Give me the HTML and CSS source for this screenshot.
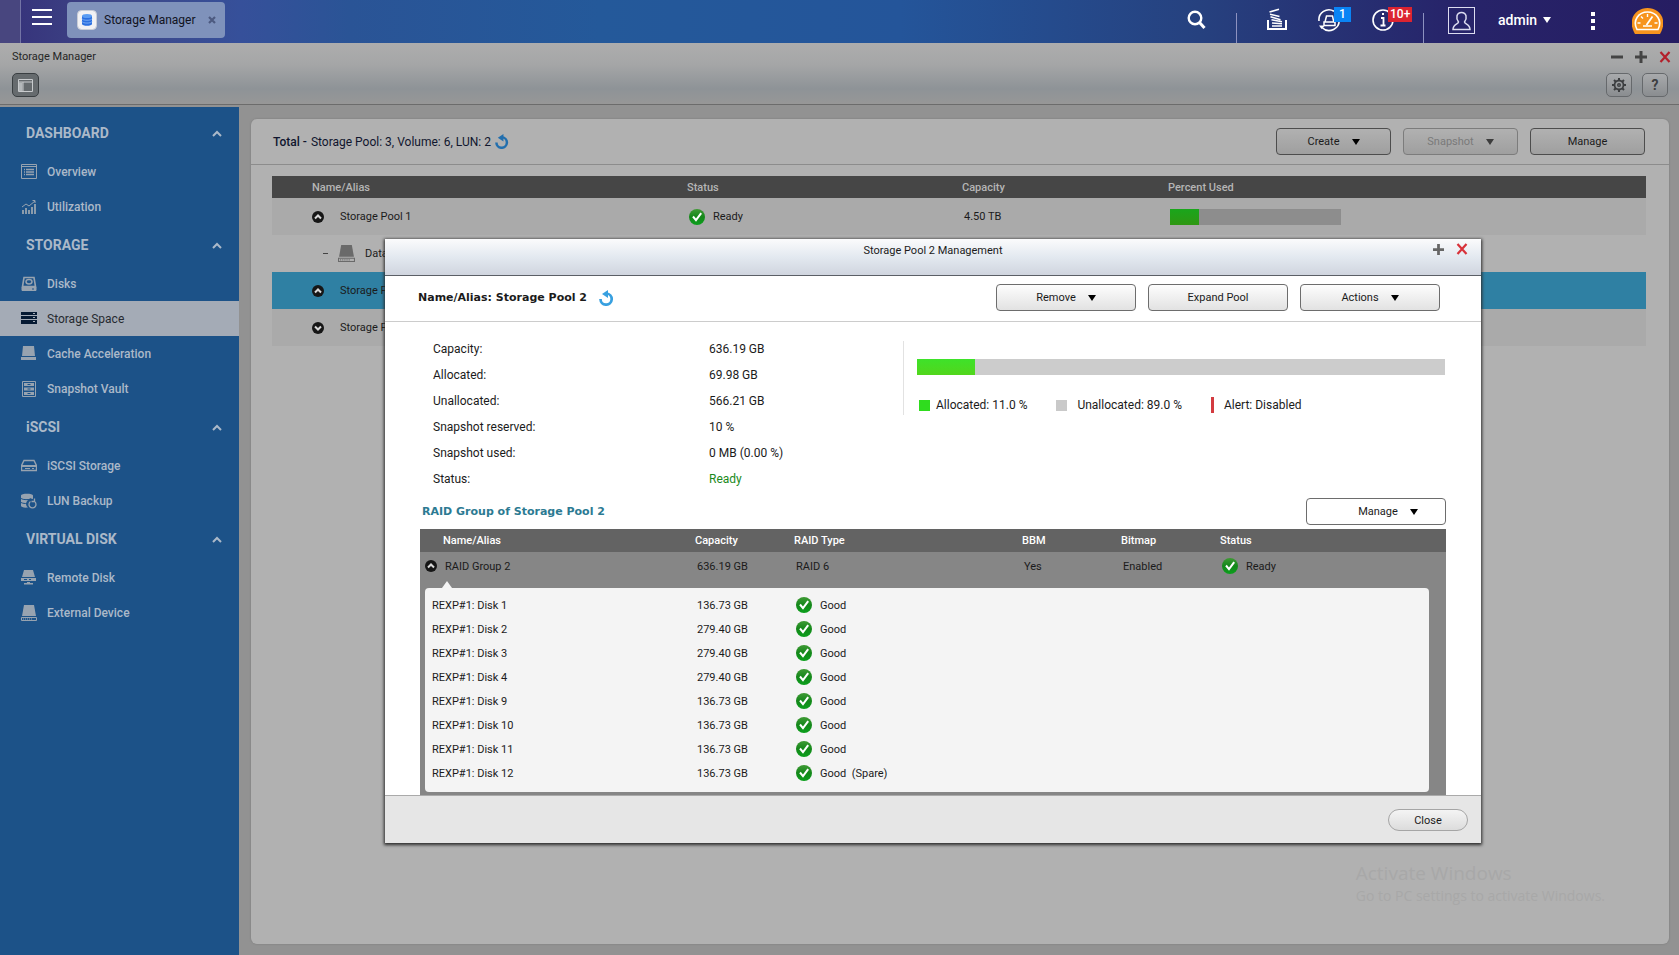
FILE: index.html
```html
<!DOCTYPE html>
<html lang="en">
<head>
    <meta charset="UTF-8">
    <meta name="viewport" content="width=device-width, initial-scale=1.0">
    <title>Storage Manager</title>
    <link rel="stylesheet" href="styles.css">
</head>
<body>

<!-- shared icons -->
<svg class="sprite" aria-hidden="true">
    <defs>
        <linearGradient id="okFill" x1="0" y1="0" x2="0" y2="1">
            <stop offset="0" stop-color="#3f9a35"/>
            <stop offset="0.5" stop-color="#14871a"/>
            <stop offset="1" stop-color="#0ba01c"/>
        </linearGradient>
    </defs>
    <symbol id="ok" viewBox="0 0 16 16">
        <circle cx="8" cy="8" r="8" fill="url(#okFill)"/>
        <path d="M4 7.5l3 3.7 5.2-7" fill="none" stroke="#fff" stroke-width="2"/>
    </symbol>
    <symbol id="up" viewBox="0 0 12 12">
        <circle cx="6" cy="6" r="6" fill="#161616"/>
        <path d="M3 7.5l3-3 3 3" fill="none" stroke="#d8d8d8" stroke-width="2"/>
    </symbol>
    <symbol id="down" viewBox="0 0 12 12">
        <circle cx="6" cy="6" r="6" fill="#161616"/>
        <path d="M3 4.5l3 3 3-3" fill="none" stroke="#d8d8d8" stroke-width="2"/>
    </symbol>
    <symbol id="refresh" viewBox="0 0 16 16">
        <path d="M7.500 3.500a5.600 5.600 0 1 1-6 5.500" fill="none" stroke="currentColor" stroke-width="2.700"/>
        <path d="M3 4L9 0v8z" fill="currentColor"/>
    </symbol>
    <symbol id="chev" viewBox="0 0 10 7">
        <path d="M1 6l4-4 4 4" fill="none" stroke="currentColor" stroke-width="2"/>
    </symbol>
    <symbol id="plus" viewBox="0 0 12 12">
        <path d="M6 0v12M0 6h12" stroke="currentColor" stroke-width="3"/>
    </symbol>
    <symbol id="minus" viewBox="0 0 12 12">
        <path d="M0 6h12" stroke="currentColor" stroke-width="3"/>
    </symbol>
    <symbol id="cross" viewBox="0 0 12 12">
        <path d="M1.5 1l9 10M10.5 1l-9 10" stroke="currentColor" stroke-width="2.2"/>
    </symbol>
    <symbol id="drive" viewBox="0 0 16 16">
        <path d="M3 0h10l2 11H1z" fill="currentColor"/>
        <path d="M.5 12.5h15v3H.5z" fill="none" stroke="currentColor"/>
        <path d="M2 14h9" stroke="currentColor" stroke-dasharray="1 1"/>
    </symbol>
</svg>

<header class="topbar">
    <button class="menu-btn" aria-label="Main menu">
        <svg width="20" height="18" viewBox="0 0 20 18"><path d="M0 2h20M0 9h20M0 16h20" stroke="#fff" stroke-width="2"/></svg>
    </button>
    <div class="app-tab">
        <svg width="20" height="20" viewBox="0 0 20 20">
            <rect x=".5" y=".5" width="19" height="19" rx="4" fill="#f1f1f4" stroke="#c9cdd6"/>
            <path d="M5 6v8c0 2.4 10 2.4 10 0V6z" fill="#2b6fe0"/>
            <ellipse cx="10" cy="6" rx="5" ry="2" fill="#5a9cf3"/>
            <path d="M5 8.6c0 2.2 10 2.2 10 0M5 11.4c0 2.2 10 2.2 10 0" fill="none" stroke="#8ab9f8" stroke-width=".8"/>
        </svg>
        <span>Storage Manager</span>
        <button class="tab-close" aria-label="Close tab">
            <svg width="8" height="8" viewBox="0 0 8 8"><path d="M1 1l6 6M7 1L1 7" stroke="#4d5a80" stroke-width="2.2"/></svg>
        </button>
    </div>

    <div class="top-tools">
        <button class="tool search" aria-label="Search">
            <svg width="20" height="20" viewBox="0 0 20 20"><circle cx="8" cy="8" r="6.3" fill="none" stroke="#fff" stroke-width="2.4"/><path d="M12.5 12.5l5 5.5" stroke="#fff" stroke-width="3"/></svg>
        </button>
        <span class="sep"></span>
        <button class="tool tasks" aria-label="Background tasks">
            <svg width="20" height="22" viewBox="0 0 20 22"><path d="M1 12v9h18v-9" fill="none" stroke="#fff" stroke-width="2"/><path d="M5 18h10M5 15l10 .8M4.5 11.700l10.500 2M3.500 8.700l10 3M3 6.200l9.500 2.300M2.500 4l9.500-2.800" stroke="#fff" stroke-width="1.600"/></svg>
        </button>
        <button class="tool devices" aria-label="External devices">
            <svg width="24" height="24" viewBox="0 0 24 24" fill="none" stroke="#fff" stroke-width="1.600"><path d="M2 13A10 10 0 0 1 17 3.200M22 11A10 10 0 0 1 5 19.500"/><path d="M2 17.500h6L4.500 21z" fill="#fff" stroke="none"/><path d="M9.500 8h6l1.300 6H8zM7 14h11v3.500H7z" stroke-width="1.500"/></svg>
            <span class="badge blue">1</span>
        </button>
        <button class="tool events" aria-label="Event notifications">
            <svg width="24" height="24" viewBox="0 0 24 24" fill="none" stroke="#fff"><circle cx="12" cy="12" r="10" stroke-width="1.600"/><path d="M10 10h2.500v7M9.500 17.500h5M11 6h2" stroke-width="1.800"/></svg>
            <span class="badge red">10+</span>
        </button>
        <span class="sep"></span>
        <button class="user-btn" aria-label="User">
            <svg width="27" height="27" viewBox="0 0 27 27" fill="none" stroke="#dcdcf0"><rect x=".5" y=".5" width="26" height="26"/><path d="M10.500 15c-3-4-2-9.500 3-9.500s6 5.500 3 9.500c0 2 5.500 2 5.500 7.500H5c0-5.500 5.500-5.500 5.500-7.500z" stroke-width="1.500"/></svg>
        </button>
        <button class="admin">admin <i class="caret"></i></button>
        <button class="tool more" aria-label="More">
            <svg width="4" height="19" viewBox="0 0 4 19" fill="#fff"><path d="M0 0h4v4H0zM0 7h4v4H0zM0 14h4v4H0z"/></svg>
        </button>
        <button class="tool" aria-label="Dashboard">
            <svg width="31" height="26" viewBox="0 0 31 26"><path d="M3 26C-6 10 5 0 15.500 0S37 10 28 26z" fill="#f7941e"/><path d="M5 21.500C0 12 7 4 15.500 4S31 12 26 21.500z" fill="none" stroke="#fff" stroke-width="1.600"/><path d="M5.500 15h3M22.500 15h3M9 8.500l2 2M15.500 6v3M11 18h9" stroke="#fff" stroke-width="1.400"/><path d="M14.500 17l6-8.500" stroke="#fff" stroke-width="1.800"/></svg>
        </button>
    </div>
</header>

<div class="titlebar">
    <div class="title-row">
        <span>Storage Manager</span>
        <div class="win-btns">
            <button aria-label="Minimize"><svg width="12" height="12"><use href="#minus"/></svg></button>
            <button aria-label="Maximize"><svg width="12" height="12"><use href="#plus"/></svg></button>
            <button class="x" aria-label="Close"><svg width="12" height="12"><use href="#cross"/></svg></button>
        </div>
    </div>
    <div class="title-row">
        <button class="pane-btn" aria-label="Toggle sidebar">
            <svg width="15" height="13" viewBox="0 0 15 13"><path d="M.5 .5h14v12H.5zM.5 3h14M5 3v9.500" fill="none" stroke="#c8cbcd"/><path d="M1 3.500h3.500V12H1z" fill="#b4b8ba"/></svg>
        </button>
        <div class="small-btns">
            <button aria-label="Settings">
                <svg width="16" height="16" viewBox="0 0 16 16" fill="none" stroke="#3c3e40"><circle cx="8" cy="8" r="4.500" stroke-width="1.800"/><circle cx="8" cy="8" r="1.300" stroke-width="1.400"/><path d="M8 1v2.500M8 12.500V15M1 8h2.500M12.500 8H15M3 3l1.800 1.800M11.200 11.200L13 13M13 3l-1.800 1.800M4.800 11.200L3 13" stroke-width="2"/></svg>
            </button>
            <button aria-label="Help">?</button>
        </div>
    </div>
</div>

<div class="workspace">
    <nav class="sidebar">
        <h2>DASHBOARD <svg width="10" height="7"><use href="#chev"/></svg></h2>
        <a href="#">
            <svg width="16" height="16" viewBox="0 0 16 16" fill="none" stroke="currentColor"><path d="M.5 .5h15v14H.5zM.5 2.500h15"/><path d="M3 5.500h1M5 5.500h8M3 8h1M5 8h8M3 10.500h1M5 10.500h8" stroke-width="1.500"/></svg>
            Overview
        </a>
        <a href="#">
            <svg width="16" height="16" viewBox="0 0 16 16" fill="none" stroke="currentColor"><path d="M2 15v-4M5 15V9M8 15v-4M11 15V8M14 15V5" stroke-width="1.800"/><path d="M1 8l4-3 3 2 6-5M11.500 1.500H14V4"/></svg>
            Utilization
        </a>
        <h2>STORAGE <svg width="10" height="7"><use href="#chev"/></svg></h2>
        <a href="#">
            <svg width="16" height="16" viewBox="0 0 16 16" fill="none" stroke="currentColor"><path d="M3 1.500h10l1.500 9h-13z" stroke-width="1.600"/><ellipse cx="8" cy="5.800" rx="3" ry="2.200" stroke-width="1.500"/><path d="M1 11h14v3.500H1z" fill="currentColor"/><path d="M11 13h2" stroke="#1c5288"/></svg>
            Disks
        </a>
        <a href="#" class="active">
            <svg width="16" height="16" viewBox="0 0 16 16" fill="#061a33"><path d="M0 1h16v3H0zM0 5h16v3H0zM0 9h16v4H0z"/><path d="M12 2.500h2M12 6.500h2M12 10.500h2" stroke="#a4acb6"/></svg>
            Storage Space
        </a>
        <a href="#">
            <svg width="16" height="16" viewBox="0 0 16 16" fill="currentColor"><path d="M2 0h11l1 10H1zM0 11h15v3H0z"/></svg>
            Cache Acceleration
        </a>
        <a href="#">
            <svg width="16" height="16" viewBox="0 0 16 16" fill="none" stroke="currentColor"><path d="M1.500 .5h13v15h-13z"/><path d="M3 3.500h10M3 8h10M3 12.500h10" stroke-width="3"/><path d="M6.500 3.500h3M6.500 8h3M6.500 12.500h3" stroke="#1c5288"/></svg>
            Snapshot Vault
        </a>
        <h2>iSCSI <svg width="10" height="7"><use href="#chev"/></svg></h2>
        <a href="#">
            <svg width="16" height="16" viewBox="0 0 16 16" fill="none" stroke="currentColor"><path d="M3 2.500h10l2.500 5v5H.5v-5z" stroke-width="1.400"/><path d="M1 8h14" stroke-width="2"/><path d="M4 10.500h5M11 10.500h2"/></svg>
            iSCSI Storage
        </a>
        <a href="#">
            <svg width="16" height="16" viewBox="0 0 16 16"><path d="M0 2.500C0 0 12 0 12 2.500V6a5 5 0 0 0-5 8.500C3 15 0 14 0 13z" fill="currentColor"/><path d="M0 5.500c2 1.500 8 1.500 10 .3M0 9.500c2 1 4 1 6 1" fill="none" stroke="#1c5288"/><path d="M9.500 8.500a3.500 3.500 0 1 0 4 0M13.500 5.500v3h-3" fill="none" stroke="currentColor" stroke-width="1.300"/></svg>
            LUN Backup
        </a>
        <h2>VIRTUAL DISK <svg width="10" height="7"><use href="#chev"/></svg></h2>
        <a href="#">
            <svg width="16" height="16" viewBox="0 0 16 16" fill="currentColor"><path d="M3 0h9l2 7H1zM0 8h15v3H0zM6 12h3v1h3v1.500H3V13h3z"/><path d="M3 9.500h3M8 9.500h2" stroke="#1c5288"/></svg>
            Remote Disk
        </a>
        <a href="#">
            <svg width="16" height="16"><use href="#drive"/></svg>
            External Device
        </a>
    </nav>

    <main class="panel">
        <div class="panel-head">
            <div class="totals">
                <b>Total -</b> <span>Storage Pool: 3, Volume: 6, LUN: 2</span>
                <button class="refresh" aria-label="Refresh"><svg width="15" height="15"><use href="#refresh"/></svg></button>
            </div>
            <div class="head-btns">
                <button class="btn dim">Create <i class="caret"></i></button>
                <button class="btn dim" disabled>Snapshot <i class="caret"></i></button>
                <button class="btn dim">Manage</button>
            </div>
        </div>
        <table class="pools">
            <colgroup><col class="c-name"><col class="c-status"><col class="c-cap"><col></colgroup>
            <thead>
                <tr><th>Name/Alias</th><th>Status</th><th>Capacity</th><th>Percent Used</th></tr>
            </thead>
            <tbody>
                <tr class="alt">
                    <td><div class="cell"><svg width="12" height="12"><use href="#up"/></svg>Storage Pool 1</div></td>
                    <td><div class="status"><svg width="16" height="16"><use href="#ok"/></svg>Ready</div></td>
                    <td>4.50 TB</td>
                    <td><div class="meter"><div class="fill" style="width: 17%"></div></div></td>
                </tr>
                <tr>
                    <td><div class="cell child"><span class="dash"></span><svg width="17" height="17"><use href="#drive"/></svg>DataVol1</div></td>
                    <td></td><td></td><td></td>
                </tr>
                <tr class="selected">
                    <td><div class="cell"><svg width="12" height="12"><use href="#up"/></svg>Storage Pool 2</div></td>
                    <td></td><td></td><td></td>
                </tr>
                <tr class="alt">
                    <td><div class="cell"><svg width="12" height="12"><use href="#down"/></svg>Storage Pool 3</div></td>
                    <td></td><td></td><td></td>
                </tr>
            </tbody>
        </table>
        <div class="watermark">
            <p class="wm-title">Activate Windows</p>
            <p>Go to PC settings to activate Windows.</p>
        </div>
    </main>
</div>

<section class="dialog" role="dialog" aria-labelledby="dlgTitle">
    <div class="dlg-title">
        <span id="dlgTitle">Storage Pool 2 Management</span>
        <div class="dlg-ctrl">
            <button aria-label="Maximize"><svg width="11" height="11"><use href="#plus"/></svg></button>
            <button class="x" aria-label="Close dialog"><svg width="12" height="12"><use href="#cross"/></svg></button>
        </div>
    </div>

    <div class="dlg-head">
        <h1>Name/Alias: Storage Pool 2</h1>
        <button class="refresh" aria-label="Refresh"><svg width="16" height="16"><use href="#refresh"/></svg></button>
        <div class="head-btns">
            <button class="btn">Remove <i class="caret"></i></button>
            <button class="btn">Expand Pool</button>
            <button class="btn">Actions <i class="caret"></i></button>
        </div>
    </div>

    <div class="summary">
        <dl>
            <dt>Capacity:</dt><dd>636.19 GB</dd>
            <dt>Allocated:</dt><dd>69.98 GB</dd>
            <dt>Unallocated:</dt><dd>566.21 GB</dd>
            <dt>Snapshot reserved:</dt><dd>10 %</dd>
            <dt>Snapshot used:</dt><dd>0 MB (0.00 %)</dd>
            <dt>Status:</dt><dd class="good">Ready</dd>
        </dl>
        <div class="usage">
            <div class="meter"><div class="fill" style="width: 11%"></div></div>
            <div class="legend">
                <span class="key green"></span><span>Allocated: 11.0 %</span>
                <span class="key grey"></span><span>Unallocated: 89.0 %</span>
                <span class="key alert"></span><span>Alert: Disabled</span>
            </div>
        </div>
    </div>

    <div class="raid-head">
        <h3>RAID Group of Storage Pool 2</h3>
        <button class="btn plain">Manage <i class="caret"></i></button>
    </div>

    <div class="raid">
        <table class="group">
            <colgroup><col class="g-name"><col class="g-cap"><col class="g-type"><col class="g-bbm"><col class="g-bmp"><col></colgroup>
            <thead>
                <tr><th>Name/Alias</th><th>Capacity</th><th>RAID Type</th><th>BBM</th><th>Bitmap</th><th>Status</th></tr>
            </thead>
            <tbody>
                <tr>
                    <td><div class="cell"><svg width="12" height="12"><use href="#up"/></svg>RAID Group 2</div></td>
                    <td>636.19 GB</td>
                    <td>RAID 6</td>
                    <td>Yes</td>
                    <td>Enabled</td>
                    <td><div class="status"><svg width="16" height="16"><use href="#ok"/></svg>Ready</div></td>
                </tr>
            </tbody>
        </table>
        <div class="disk-box">
            <table class="disks" aria-label="Disks of RAID Group 2">
                <colgroup><col class="d-name"><col class="g-cap"><col></colgroup>
                <tbody>
                    <tr><td>REXP#1: Disk 1</td><td>136.73 GB</td><td><div class="status"><svg width="16" height="16"><use href="#ok"/></svg>Good</div></td></tr>
                    <tr><td>REXP#1: Disk 2</td><td>279.40 GB</td><td><div class="status"><svg width="16" height="16"><use href="#ok"/></svg>Good</div></td></tr>
                    <tr><td>REXP#1: Disk 3</td><td>279.40 GB</td><td><div class="status"><svg width="16" height="16"><use href="#ok"/></svg>Good</div></td></tr>
                    <tr><td>REXP#1: Disk 4</td><td>279.40 GB</td><td><div class="status"><svg width="16" height="16"><use href="#ok"/></svg>Good</div></td></tr>
                    <tr><td>REXP#1: Disk 9</td><td>136.73 GB</td><td><div class="status"><svg width="16" height="16"><use href="#ok"/></svg>Good</div></td></tr>
                    <tr><td>REXP#1: Disk 10</td><td>136.73 GB</td><td><div class="status"><svg width="16" height="16"><use href="#ok"/></svg>Good</div></td></tr>
                    <tr><td>REXP#1: Disk 11</td><td>136.73 GB</td><td><div class="status"><svg width="16" height="16"><use href="#ok"/></svg>Good</div></td></tr>
                    <tr><td>REXP#1: Disk 12</td><td>136.73 GB</td><td><div class="status"><svg width="16" height="16"><use href="#ok"/></svg>Good&nbsp; (Spare)</div></td></tr>
                </tbody>
            </table>
        </div>
    </div>

    <div class="dlg-foot">
        <button class="close-btn">Close</button>
    </div>
</section>

</body>
</html>
```
FILE: styles.css
```css
* {
    box-sizing: border-box;
}

body {
    margin: 0;
    min-height: 100vh;
    display: flex;
    flex-direction: column;
    position: relative;
    background: #929292;
    font-family: Roboto, "Liberation Sans", sans-serif;
    font-size: 11px;
    color: #1b1b1b;
}

h1, h2, h3, p, dl, dd {
    margin: 0;
}

button {
    font-family: inherit;
    font-size: 11px;
    color: inherit;
    background: none;
    border: none;
    padding: 0;
    cursor: pointer;
}

svg {
    display: block;
    flex: none;
}

.sprite {
    position: absolute;
    width: 0;
    height: 0;
}

.caret {
    display: inline-block;
    border: 4px solid transparent;
    border-top: 6px solid currentColor;
    border-bottom: 0;
}

/* top bar */
.topbar {
    height: 43px;
    display: flex;
    align-items: flex-start;
    background: linear-gradient(90deg, #48467f 0, #48467f 20px, #37357c 21px, #3e4788 120px, #36509a 240px, #2a5496 350px, #24599a 600px, #24559a 900px, #26417f 1200px, #27246a 1450px, #261d62 100%);
}

.menu-btn {
    margin-left: 20px;
    padding: 8px 12px 8px 11px;
    height: 43px;
    border-left: 1px solid #7374a5;
    display: flex;
}

.app-tab {
    display: flex;
    align-items: center;
    width: 158px;
    height: 36px;
    margin: 2px 0 0 3px;
    padding: 0 9px 0 10px;
    gap: 7px;
    border-radius: 4px;
    background: #7f92bb;
    font-size: 12px;
    color: #11131f;
    white-space: nowrap;
}

.tab-close {
    margin-left: auto;
}

.top-tools {
    margin-left: auto;
    padding-right: 16px;
    height: 43px;
    display: flex;
    align-items: flex-start;
}

.tool {
    position: relative;
    padding-top: 8px;
}

.search {
    padding-top: 10px;
    margin-right: 29px;
}

.sep {
    width: 1px;
    height: 30px;
    margin-top: 13px;
    background: #8d92c0;
}

.tasks {
    margin: 0 30px 0 30px;
}

.devices {
    margin-right: 30px;
}

.events {
    margin-right: 28px;
}

.badge {
    position: absolute;
    left: 17px;
    top: 7px;
    height: 15px;
    padding: 0 5px;
    line-height: 15px;
    font-size: 12px;
    font-weight: 500;
    color: #fff;
}

.badge.blue {
    background: #0a84f5;
}

.badge.red {
    padding: 0 2px;
    background: #dc2431;
}

.user-btn {
    padding-top: 7px;
    margin-left: 24px;
}

.admin {
    display: flex;
    align-items: center;
    gap: 6px;
    height: 40px;
    margin: 0 40px 0 23px;
    font-size: 14px;
    font-weight: 500;
    color: #fff;
}

.more {
    padding-top: 12px;
    margin-right: 37px;
}

/* window title */
.titlebar {
    height: 62px;
    padding: 0 8px 0 12px;
    background: linear-gradient(#adadad, #a5a6a7 35%, #8e9397 75%, #979797);
    border-bottom: 1px solid #6c6c6c;
}

.title-row {
    display: flex;
    justify-content: space-between;
    align-items: center;
    height: 27px;
    color: #262626;
}

.win-btns {
    display: flex;
    gap: 12px;
    color: #444;
}

.x {
    color: #b3202b;
}

.pane-btn,
.small-btns button {
    display: flex;
    align-items: center;
    justify-content: center;
    width: 27px;
    height: 24px;
    border-radius: 5px;
    border: 1px solid #3a3f42;
    background: #666b6e;
}

.small-btns {
    display: flex;
    gap: 10px;
    padding-right: 3px;
}

.small-btns button {
    width: 26px;
    border-color: #66696c;
    background: linear-gradient(#a8aaac, #8a8d90);
    font-size: 14px;
    font-weight: 700;
    color: #3c3e40;
}

.title-row + .title-row {
    height: 30px;
}

/* body */
.workspace {
    flex: 1;
    display: flex;
    margin-top: 2px;
}

.sidebar {
    width: 239px;
    padding-top: 5px;
    background: #1c5288;
    color: #abb9c9;
}

.sidebar h2 {
    display: flex;
    align-items: center;
    justify-content: space-between;
    height: 42px;
    padding: 0 17px 0 26px;
    font-size: 14px;
    font-weight: 700;
}

.sidebar a {
    display: flex;
    align-items: center;
    gap: 10px;
    height: 35px;
    padding-left: 21px;
    font-size: 12px;
    font-weight: 500;
    color: inherit;
    text-decoration: none;
}

.sidebar a svg {
    color: #97a3b0;
}

.sidebar a.active {
    background: #a4abb6;
    color: #262a30;
    font-weight: 400;
}

.panel {
    position: relative;
    flex: 1;
    margin: 12px 10px 11px 12px;
    border-radius: 6px;
    background: #b1b1b1;
    box-shadow: 0 0 2px #777;
}

.panel-head {
    display: flex;
    align-items: center;
    justify-content: space-between;
    height: 46px;
    padding: 0 24px 0 22px;
    border-bottom: 1px solid #8c8c8c;
}

.totals {
    display: flex;
    align-items: center;
    gap: 4px;
    font-size: 12px;
    color: #10162e;
}

.totals b {
    font-weight: 500;
}

.refresh {
    margin-left: 12px;
    color: #38a0e0;
}

.totals .refresh {
    margin-left: 0;
    color: #226fae;
}

.head-btns {
    display: flex;
    gap: 12px;
}

.btn {
    display: flex;
    align-items: center;
    justify-content: center;
    gap: 12px;
    width: 140px;
    height: 27px;
    border: 1px solid #6d6d6d;
    border-radius: 4px;
    background: linear-gradient(#fdfdfd, #e2e2e2);
}

.btn.dim {
    width: 115px;
    border-color: #4d4d4d;
    background: linear-gradient(#b1b1b1, #9f9f9f);
}

.btn.dim:disabled {
    border-color: #7c7c7c;
    color: #7a7a7a;
}

.btn .caret {
    color: #000;
}

.btn:disabled .caret {
    color: #3c3c3c;
}

.btn.plain {
    padding-left: 24px;
    background: #fff;
}

/* tables */
table {
    border-collapse: collapse;
    table-layout: fixed;
    width: 100%;
}

th {
    padding: 0;
    text-align: left;
    font-weight: 500;
}

td {
    padding: 0;
    white-space: nowrap;
}

.cell,
.status {
    display: flex;
    align-items: center;
    gap: 8px;
}

.pools {
    width: auto;
    min-width: calc(100% - 44px);
    margin: 11px 23px 0 21px;
}

.pools th {
    height: 22px;
    background: #464646;
    color: #b5b5b5;
}

.pools td {
    height: 37px;
    padding-left: 2px;
}

.pools th:first-child {
    padding-left: 40px;
}

.pools td:first-child {
    padding-left: 40px;
}

.pools .cell {
    gap: 16px;
}

.pools .child {
    gap: 10px;
    padding-left: 11px;
}

.pools .child svg {
    color: #6a6a6a;
}

.dash {
    width: 5px;
    height: 1px;
    background: #444;
}

.c-name { width: 415px; }
.c-status { width: 275px; }
.c-cap { width: 206px; }

.alt {
    background: #aaa;
}

.selected {
    background: #2f80a3;
}

.meter {
    height: 16px;
    background: #ccc;
}

.fill {
    height: 100%;
    background: linear-gradient(#3ee22a, #52d61c);
}

.pools .meter {
    width: 171px;
    background: #8d8d8d;
}

.pools .fill {
    background: linear-gradient(#1aa61c, #2f9712);
}

.watermark {
    position: absolute;
    right: 64px;
    bottom: 39px;
    font-family: "Open Sans", sans-serif;
    font-size: 14px;
    color: #a8a8a8;
}

.wm-title {
    font-size: 19px;
}

/* pool dialog */
.dialog {
    position: absolute;
    left: 385px;
    right: 198px;
    top: 239px;
    background: #fff;
    box-shadow: 0 1px 3px 1px #2c2c2c;
}

.dlg-title {
    position: relative;
    height: 37px;
    padding-top: 5px;
    line-height: 14px;
    text-align: center;
    background: linear-gradient(#fbfbfc, #e3e9f0 50%, #d0d5df);
    border-bottom: 1px solid #5b5f66;
}

.dlg-ctrl {
    position: absolute;
    right: 13px;
    top: 4px;
    display: flex;
    gap: 12px;
    color: #666;
}

.dlg-ctrl .x {
    color: #d8323a;
}

.dlg-head {
    display: flex;
    align-items: center;
    height: 46px;
    padding: 0 41px 2px 33px;
    border-bottom: 1px solid #ccc;
}

.dlg-head .head-btns {
    margin-left: auto;
}

h1, h3 {
    font-family: Verdana, "DejaVu Sans", sans-serif;
    font-size: 11px;
    font-weight: 700;
}

.summary {
    display: flex;
    padding: 14px 36px 0 48px;
    font-size: 12px;
    line-height: 26px;
}

.summary dl {
    display: grid;
    grid-template-columns: 276px 194px;
}

.good {
    color: #1b8a1b;
}

.usage {
    flex: 1;
    height: 74px;
    margin-top: 5px;
    padding: 18px 0 0 13px;
    border-left: 1px solid #e2e2e2;
}

.legend {
    display: flex;
    align-items: center;
    margin-top: 17px;
    padding-left: 2px;
}

.key {
    width: 11px;
    height: 11px;
    margin-right: 6px;
}

.green {
    background: #2fdc1e;
}

.grey {
    margin: 0 10px 0 29px;
    background: #c9c9c9;
}

.alert {
    width: 3px;
    height: 16px;
    margin: 0 10px 0 29px;
    background: #d33b40;
}

.raid-head {
    display: flex;
    align-items: center;
    justify-content: space-between;
    padding: 6px 35px 4px 37px;
}

.raid-head h3 {
    color: #2c7a92;
}

.raid {
    margin: 0 35px 0 35px;
    padding-bottom: 3px;
    background: #868686;
}

.group th {
    height: 23px;
    background: #636363;
    color: #fff;
}

.group th:first-child {
    padding-left: 23px;
}

.group td {
    height: 28px;
    padding-left: 2px;
}

.group td:first-child {
    padding-left: 5px;
}

.g-name { width: 275px; }
.g-cap { width: 99px; }
.g-type { width: 228px; }
.g-bbm { width: 99px; }
.g-bmp { width: 99px; }
.d-name { width: 265px; }

.disk-box {
    position: relative;
    margin: 8px 17px 0 5px;
    padding: 5px 0 7px 7px;
    border-radius: 4px;
    background: #f4f4f4;
}

.disk-box::before {
    content: "";
    position: absolute;
    left: 17px;
    top: -7px;
    border: 5px solid transparent;
    border-bottom: 7px solid #f4f4f4;
    border-top: 0;
}

.disks td {
    height: 24px;
}

.dlg-foot {
    display: flex;
    justify-content: flex-end;
    padding: 13px 13px 12px;
    background: #e6e6e6;
    border-top: 1px solid #aaa;
}

.close-btn {
    width: 80px;
    height: 22px;
    border: 1px solid #a5a5a5;
    border-radius: 11px;
    background: linear-gradient(#f4f4f4, #dcdcdc);
}
```
